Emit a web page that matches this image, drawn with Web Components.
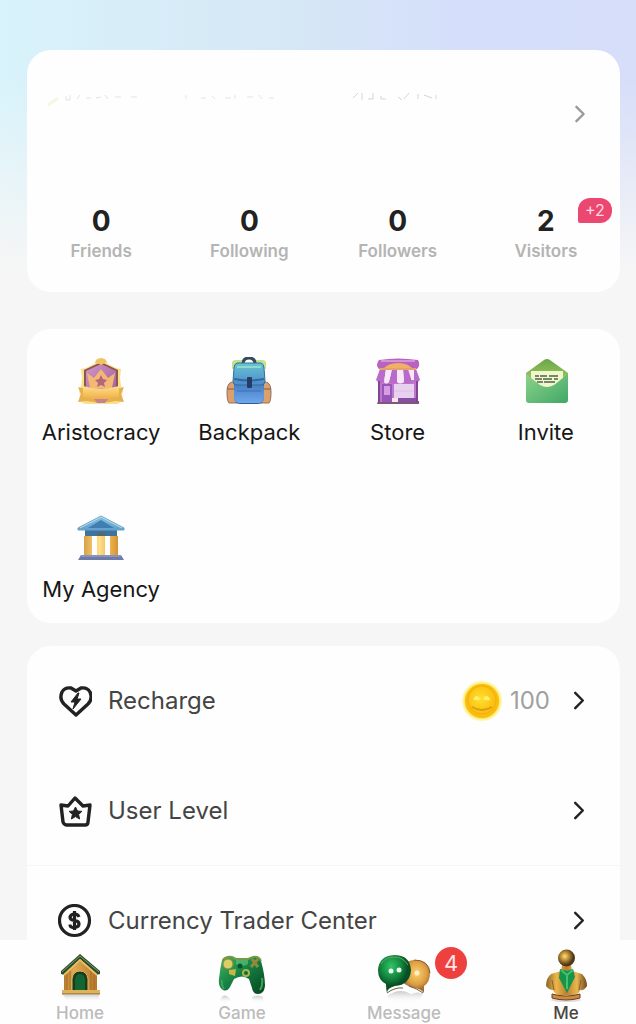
<!DOCTYPE html>
<html lang="en">
<head>
  <meta charset="UTF-8">
  <meta name="viewport" content="width=device-width, initial-scale=1">
  <title>Me</title>
  <style>
    body {
      margin: 0;
      font-family: Inter, "Liberation Sans", sans-serif;
      color: #222;
    }
  </style>
</head>
<body>
  <profile-page>
    <profile-card>
      <stat-item count="0" label="Friends"></stat-item>
      <stat-item count="0" label="Following"></stat-item>
      <stat-item count="0" label="Followers"></stat-item>
      <stat-item count="2" label="Visitors" badge="+2"></stat-item>
    </profile-card>

    <shortcut-grid>
      <shortcut-item icon="aristocracy">Aristocracy</shortcut-item>
      <shortcut-item icon="backpack">Backpack</shortcut-item>
      <shortcut-item icon="store">Store</shortcut-item>
      <shortcut-item icon="invite">Invite</shortcut-item>
      <shortcut-item icon="agency">My Agency</shortcut-item>
    </shortcut-grid>

    <menu-list>
      <menu-row icon="recharge" label="Recharge"><coin-amount>100</coin-amount></menu-row>
      <menu-row icon="level" label="User Level" divider></menu-row>
      <menu-row icon="dollar" label="Currency Trader Center"></menu-row>
    </menu-list>

    <tab-bar slot="tabs">
      <tab-item icon="home" label="Home"></tab-item>
      <tab-item icon="game" label="Game"></tab-item>
      <tab-item icon="message" label="Message" badge="4"></tab-item>
      <tab-item icon="me" label="Me" active></tab-item>
    </tab-bar>
  </profile-page>

  <script>
    const ICONS = {
      chevron: `<svg viewBox="0 0 12 20"><path d="M2 2l8 8-8 8" fill="none" stroke="currentColor" stroke-width="2.6" stroke-linecap="round" stroke-linejoin="round"/></svg>`,

      aristocracy: `<svg viewBox="0 0 48 48">
        <defs>
          <linearGradient id="gold" x2="0" y2="1"><stop offset="0" stop-color="#ffe08a"/><stop offset="1" stop-color="#f0ae48"/></linearGradient>
          <linearGradient id="plum" x2="1" y2="1"><stop offset="0" stop-color="#d096c4"/><stop offset="1" stop-color="#9f5a9c"/></linearGradient>
        </defs>
        <path d="M4 12l5-1 8-4 3-4 4-2 4 2 3 4 8 4 5 1-1 9 1 8 2 4-1 5 1 6-6 3H8l-6-3 1-6-1-5 2-4 1-8z" fill="#f9e08a"/>
        <path d="M7 13l17-8 17 8v20l-8 10-9 3-9-3-8-10z" fill="#8f5350"/>
        <path d="M9 14l15-7 15 7v18l-7 9-8 3-8-3-7-9z" fill="url(#plum)"/>
        <path d="M18 5l2-3 4-1 4 1 2 3-6 3z" fill="#eec562"/>
        <path d="M10 16l7 5 7-9 7 9 7-5-3 15H13z" fill="#f3b873"/>
        <path d="M24 18l2 4 4 1-3 3 1 4-4-2-4 2 1-4-3-3 4-1z" fill="#b4677c"/>
        <path d="M1 30l7 2q16 4 32 0l7-2-3 7 3 8-8-1q-15 3-30 0l-8 1 3-8z" fill="#e6b04e"/>
        <path d="M6 29q18 5 36 0v11q-18 4-36 0z" fill="url(#gold)"/>
        <path d="M17 42h14l-3 4h-8z" fill="#c58290"/>
      </svg>`,

      backpack: `<svg viewBox="0 0 48 48">
        <defs>
          <linearGradient id="flap" x2="0" y2="1"><stop offset="0" stop-color="#6ac5cd"/><stop offset="1" stop-color="#4b8bd0"/></linearGradient>
          <linearGradient id="bag" x2="0" y2="1"><stop offset="0" stop-color="#4379bd"/><stop offset="1" stop-color="#6ea7ed"/></linearGradient>
        </defs>
        <path d="M7 12V6q0-3 4-3h6v6zM41 12V6q0-3-4-3h-6v6z" fill="#bfe28f"/>
        <path d="M18 7q0-6 6-6t6 6" fill="none" stroke="#34495a" stroke-width="3"/>
        <path d="M7 25q-5 1-5 10 0 9 2 11h9V25zM41 25q5 1 5 10 0 9-2 11h-9V25z" fill="#dda06d" stroke="#93705b"/>
        <path d="M2 32h8M38 32h8" stroke="#76604f"/>
        <rect x="9" y="7" width="30" height="40" rx="6" fill="#315c8d"/>
        <rect x="9" y="25" width="30" height="21" rx="5" fill="url(#bag)"/>
        <path d="M12 6h24q3 1 3 5l1 13q0 4-4 4H12q-4 0-4-4l1-13q0-4 3-5z" fill="url(#flap)" stroke="#31709a"/>
        <path d="M12 10h24" stroke="#90d9d1" stroke-width="2"/>
        <path d="M9 22q15 3 30 0" fill="none" stroke="#34689b" stroke-width="2"/>
        <rect x="22" y="20" width="5" height="11" rx="1" fill="#253c65"/>
        <path d="M12 34h24" stroke="#3b70b5"/>
      </svg>`,

      store: `<svg viewBox="0 0 48 48">
        <path d="M4 44h41v3H3z" fill="#805875"/>
        <path d="M5 16h38v29H5z" fill="#bf77ce"/>
        <path d="M5 3q19-3 39 0 3 5-1 9H5Q1 8 5 3z" fill="#b864bf"/>
        <path d="M7 4h34" stroke="#d492d7" stroke-width="2"/>
        <path d="M9 12q5-6 15-6t15 6z" fill="#f1b063"/>
        <path d="M6 12h36l4 11H2z" fill="#f8e8f8"/>
        <path d="M6 12h6l-2 13q-4 3-8-2zM18 12h5v13q-4 3-8 0zM29 12h5l4 13q-4 3-8 0zM40 12h2l4 11q-3 4-6 2z" fill="#b86bc8"/>
        <path d="M12 12h6l-3 13q-3 3-5 0zM23 12h6l1 13q-4 3-7 0z" fill="#f8e8f8"/>
        <path d="M6 12h36" stroke="#e4a26d" stroke-width="2"/>
        <rect x="8" y="27" width="10" height="18" fill="#9657b8"/>
        <rect x="10" y="29" width="6" height="9" fill="#d99be1"/>
        <rect x="20" y="27" width="20" height="14" fill="#e7d1ef"/>
        <path d="M20 34h20" stroke="#dcbfe8"/>
        <path d="M19 41h23v4H19z" fill="#8750a4"/>
        <path d="M18 41h6v4h-6z" fill="#f5e7ea"/>
        <path d="M5 24v21M43 24v21" stroke="#804590" stroke-width="2"/>
      </svg>`,

      invite: `<svg viewBox="0 0 48 48">
        <defs>
          <linearGradient id="lid" x2="0" y2="1"><stop offset="0" stop-color="#6aa548"/><stop offset="1" stop-color="#c9e579"/></linearGradient>
          <linearGradient id="front" x2="1" y2="1"><stop offset="0" stop-color="#8ed38a"/><stop offset="1" stop-color="#3fa867"/></linearGradient>
        </defs>
        <path d="M4 16L22 3q3-2 6 0l18 13v25H4z" fill="url(#lid)"/>
        <path d="M9 14h32v22H9z" fill="#f1f7c8"/>
        <path d="M13 19h4m1 0h7m2 0h9M13 22h7m1 0h9m2 0h4M15 25h6m1 0h11" stroke="#4e6350" stroke-width="1.6"/>
        <path d="M4 17l14 11q7 4 14 0l14-11v26q0 3-3 3H7q-3 0-3-3z" fill="url(#front)"/>
      </svg>`,

      agency: `<svg viewBox="0 0 48 48">
        <defs>
          <linearGradient id="column"><stop offset="0" stop-color="#d9a044"/><stop offset=".45" stop-color="#ffdf87"/><stop offset="1" stop-color="#d9932c"/></linearGradient>
          <linearGradient id="roof" x2="0" y2="1"><stop offset="0" stop-color="#8bc2e2"/><stop offset="1" stop-color="#5f9fcc"/></linearGradient>
        </defs>
        <path d="M8 16h32v6H8z" fill="#3d739e"/>
        <path d="M7 22h8v20H7zM20 21h8v21h-8zM33 22h8v20h-8z" fill="url(#column)"/>
        <path d="M20 19h8v3h-8z" fill="#5e6468"/>
        <path d="M24 2l23 12v2H1v-2z" fill="url(#roof)" stroke="#6ba3c8"/>
        <path d="M24 6l13 8H11z" fill="#3f7eb1"/>
        <path d="M3 14L24 3l21 11" fill="none" stroke="#b7dced"/>
        <path d="M4 41h40l3 5H1z" fill="#6c7baa"/>
        <path d="M4 42h40" stroke="#a7acd0"/>
      </svg>`,

      recharge: `<svg viewBox="0 0 34 34">
        <path d="M18 31L6 20Q1 15 4 8 7 3 13 4l5 3 5-3Q29 3 32 8 35 15 30 20z" fill="none" stroke="currentColor" stroke-width="3.400" stroke-linejoin="round"/>
        <path d="M20 9l-7 9h4l-2 7 8-10h-4l2-6z" fill="currentColor" stroke="currentColor" stroke-linejoin="round"/>
      </svg>`,

      level: `<svg viewBox="0 0 34 34">
        <path d="M3 11l7 1 7-8 8 8 7-1-2 17q0 3-3 3H9q-3 0-4-3z" fill="none" stroke="currentColor" stroke-width="3.400" stroke-linejoin="round"/>
        <path d="M17.500 13l2 4 4.400.4-3.300 3 1 4.600-4.100-2.400-4.100 2.400 1-4.600-3.300-3 4.400-.4z" fill="currentColor" stroke="currentColor" stroke-linejoin="round"/>
      </svg>`,

      dollar: `<svg viewBox="0 0 34 34" fill="none" stroke="currentColor">
        <circle cx="16.500" cy="16.500" r="15" stroke-width="3.200"/>
        <path d="M21 13q-1-3-4.500-3T12 13q0 3 4.500 3.500t4.500 3.500-4.500 3.500-4.500-3M16.500 7v19" stroke-width="3.200"/>
      </svg>`,

      coin: `<svg viewBox="0 0 42 42">
        <defs>
          <radialGradient id="glow"><stop offset=".78" stop-color="#ffe126"/><stop offset="1" stop-color="#ffec5b" stop-opacity="0"/></radialGradient>
          <radialGradient id="face" cx=".45" cy=".45"><stop offset="0" stop-color="#ffe12d"/><stop offset="1" stop-color="#fbc012"/></radialGradient>
        </defs>
        <circle cx="21" cy="21" r="21" fill="url(#glow)"/>
        <circle cx="21" cy="21" r="17" fill="#f9bd10"/>
        <circle cx="21" cy="20" r="14" fill="url(#face)" stroke="#f1ad13"/>
        <path d="M14 20q1-5 4 0M24 20q1-5 4 0" fill="none" stroke="#ffef72" stroke-width="3"/>
        <path d="M11 27q10 6 20 0" fill="none" stroke="#dba00c" stroke-width="2"/>
      </svg>`,

      home: `<svg viewBox="0 0 56 56">
        <defs>
          <linearGradient id="wall" x2="1"><stop offset="0" stop-color="#b57b2d"/><stop offset=".3" stop-color="#e0aa55"/><stop offset="1" stop-color="#b8782c"/></linearGradient>
          <linearGradient id="shade" x2="0" y2="1"><stop offset="0" stop-color="#888" stop-opacity=".35"/><stop offset="1" stop-color="#fff" stop-opacity="0"/></linearGradient>
        </defs>
        <path d="M11 48h36v7H16z" fill="url(#shade)"/>
        <path d="M28 11l17 14v20H12V25z" fill="url(#wall)"/>
        <path d="M15 27v16M42 27v16M18 24v19M39 24v19" stroke="#a66b29"/>
        <path d="M28 7L9 24v3l4 1 15-14 16 14 4-1v-3z" fill="#254d2d"/>
        <path d="M10 25L28 9l19 16" fill="none" stroke="#8f9967"/>
        <path d="M12 28l16-15 17 15" fill="none" stroke="#efc061" stroke-width="2"/>
        <path d="M20 44V32q1-8 8-8t8 8v12z" fill="#173d1e" stroke="#e2b651"/>
        <path d="M23 43V32q1-5 5-5t5 5v11z" fill="#146534"/>
        <path d="M10 43h38v4H10z" fill="#deb15b"/><path d="M10 47h38" stroke="#87602d"/>
      </svg>`,

      game: `<svg viewBox="0 0 56 56">
        <defs>
          <linearGradient id="pad" x2="1" y2="1"><stop offset="0" stop-color="#43b866"/><stop offset=".45" stop-color="#168144"/><stop offset="1" stop-color="#06441f"/></linearGradient>
          <linearGradient id="shade" x2="0" y2="1"><stop offset="0" stop-color="#777" stop-opacity=".4"/><stop offset="1" stop-color="#fff" stop-opacity="0"/></linearGradient>
        </defs>
        <path d="M6 54q3-9 9-3l3 5H8zM38 50q6-3 11 0v6H40z" fill="url(#shade)"/>
        <path d="M8 13q2-4 10-3l4 2h12l5-2q6-1 8 4 4 14 4 25-1 8-7 8-5 0-6-6l-3-9q-7-5-15 0l-4 8q-3 5-7 3-5-3-4-11 1-10 3-19z" fill="url(#pad)"/>
        <path d="M9 13q3-4 9-3l4 2h12l5-2q6-1 8 4" fill="none" stroke="#719d46" stroke-width="2"/>
        <circle cx="14" cy="17" r="5" fill="#d9cf68" stroke="#9d8532"/>
        <path d="M15 23l7-1-1 7-6-2z" fill="#c4b746"/>
        <path d="M22 13h12v4q-6 4-12 0z" fill="#67c477" opacity=".6"/>
        <circle cx="26" cy="19" r="2.500" fill="#08562d"/>
        <circle cx="32" cy="26" r="3" fill="#136a36" stroke="#a9b74c" stroke-width="2"/>
        <path d="M38 12l6 8M44 12l-7 8" stroke="#8f8a3c" stroke-width="3"/>
        <path d="M8 33q-1 5 2 9M48 31q1 8-2 12" fill="none" stroke="#3fa35a" stroke-width="2"/>
      </svg>`,

      message: `<svg viewBox="0 0 56 56">
        <defs>
          <radialGradient id="green" cx=".4" cy=".3"><stop offset="0" stop-color="#32c568"/><stop offset=".65" stop-color="#12853d"/><stop offset="1" stop-color="#075025"/></radialGradient>
          <radialGradient id="amber" cx=".55" cy=".4"><stop offset="0" stop-color="#ffd16a"/><stop offset=".7" stop-color="#dc9e43"/><stop offset="1" stop-color="#a36c31"/></radialGradient>
          <linearGradient id="shade" x2="0" y2="1"><stop offset="0" stop-color="#777" stop-opacity=".4"/><stop offset="1" stop-color="#fff" stop-opacity="0"/></linearGradient>
        </defs>
        <path d="M11 49q13-9 24-2 7-3 12 0l-5 9H16z" fill="url(#shade)"/>
        <path d="M38 13q15 0 16 13 0 9-6 13v7q-3-4-9-5-13-2-15-12 1-15 14-16z" fill="url(#amber)"/>
        <path d="M38 13q15 0 16 13" fill="none" stroke="#88582d"/>
        <path d="M18 8q16 0 17 15-1 15-16 16-8 2-8 7-1-3-1-9-8-4-8-14Q3 9 18 8z" fill="url(#green)"/>
        <path d="M5 17q4-7 13-7t14 8" fill="none" stroke="#60a767"/>
        <circle cx="15" cy="24" r="2.500" fill="#e9ffed"/><circle cx="23" cy="23" r="2.500" fill="#e9ffed"/><circle cx="41" cy="26" r="2.500" fill="#fff1ce"/>
        <path d="M11 46q8-6 16-5M33 39q9 3 14 7" fill="none" stroke="#6e623d"/>
      </svg>`,

      me: `<svg viewBox="0 0 56 56">
        <defs>
          <radialGradient id="head" cx=".4" cy=".4"><stop offset="0" stop-color="#ffe17b"/><stop offset=".5" stop-color="#b98a35"/><stop offset="1" stop-color="#4e3718"/></radialGradient>
          <linearGradient id="body"><stop offset="0" stop-color="#87652a"/><stop offset=".25" stop-color="#edb64b"/><stop offset=".5" stop-color="#b9822d"/><stop offset=".75" stop-color="#e9b651"/><stop offset="1" stop-color="#6e471d"/></linearGradient>
        </defs>
        <ellipse cx="28" cy="53" rx="15" ry="2" fill="#ddd"/>
        <path d="M24 18h9l1 6 10 3q5 5 5 12-3 5-7 4-1 4-6 5H20q-4-2-5-5-4 0-7-4 0-8 5-12l10-3z" fill="url(#body)"/>
        <circle cx="28.500" cy="11" r="8.500" fill="url(#head)"/>
        <path d="M22 22l7 2 6-2 2 8-8 16-8-15z" fill="#17934a"/>
        <path d="M23 23l6 5 6-5M29 28v14" fill="none" stroke="#3ec375" stroke-width="2"/>
        <path d="M14 33l2 10M43 33l-2 10" stroke="#8f6022"/>
        <path d="M14 47q14 4 28 0v4q-14 4-28 0z" fill="#c98d40" stroke="#743b1e"/>
      </svg>`
    };

    class AppIcon extends HTMLElement {
      connectedCallback() {
        const shadowDOM = this.attachShadow({ mode: "open" });
        shadowDOM.innerHTML = `
        <style>
          :host {
            display: block;
            flex: none;
          }

          svg {
            display: block;
            width: 100%;
            height: 100%;
          }
        </style>
        ${ICONS[this.getAttribute("name")]}
        `;
        shadowDOM.querySelector("svg").setAttribute("aria-hidden", "true");
      }
    }

    class ProfilePage extends HTMLElement {
      connectedCallback() {
        this.attachShadow({ mode: "open" }).innerHTML = `
        <style>
          :host {
            display: flex;
            flex-direction: column;
            height: 100vh;
            background:
              linear-gradient(to bottom, transparent 0, transparent 80px, #f6f6f6 270px),
              linear-gradient(to right, #d8f3fb, #d6e7f5 45%, #d5defb 75%, #d6def9);
          }

          main {
            box-sizing: border-box;
            flex: 1;
            min-height: 0;
            overflow: hidden auto;
            scrollbar-width: none;
            padding: 50px 16px 0 27px;
          }
        </style>
        <main><slot></slot></main>
        <slot name="tabs"></slot>
        `;
      }
    }

    class ProfileCard extends HTMLElement {
      connectedCallback() {
        this.attachShadow({ mode: "open" }).innerHTML = `
        <style>
          :host {
            display: block;
            background: #fefefe;
            border-radius: 24px;
            margin-bottom: 37px;
            padding-bottom: 29px;
          }

          .profile {
            display: flex;
            align-items: center;
            justify-content: space-between;
            height: 128px;
            padding: 0 34px 0 20px;
            color: #999;
          }

          .name {
            width: 400px;
            height: 48px;
          }

          app-icon {
            width: 12px;
            height: 18px;
          }

          .stats {
            display: grid;
            grid-template-columns: repeat(4, 1fr);
            padding-top: 27px;
          }
        </style>
        <a class="profile" href="#profile" aria-label="Profile">
          <svg class="name" viewBox="0 0 400 48" aria-hidden="true" fill="none" stroke="#e3e3e3">
            <path d="M1 15l10-7" stroke="#f2f9df" stroke-width="3"/>
            <path d="M19 6v4h4V5M30 9l3-4M39 8h5M49 8l5-1M58 5l3 4M68 7h6M84 7h6M139 5v4M154 8h5M165 6l3 3M178 8h6M188 5v4M200 7h6M212 5l3 4M222 8h5" stroke-width="1"/>
            <path d="M306 8l5-5M315 3v7M321 9h5V3M334 6v3h5M351 7l4 3M357 9l5-6M371 4v5M377 5l8 3M389 5v4" stroke="#d5d5d5" stroke-width="1"/>
          </svg>
          <app-icon name="chevron"></app-icon>
        </a>
        <div class="stats"><slot></slot></div>
        `;
      }
    }

    class StatItem extends HTMLElement {
      connectedCallback() {
        const badge = this.getAttribute("badge");

        this.attachShadow({ mode: "open" }).innerHTML = `
        <style>
          :host {
            display: block;
          }

          a {
            position: relative;
            display: flex;
            flex-direction: column;
            align-items: center;
            gap: 2px;
            color: #222;
            text-decoration: none;
          }

          .count {
            font-size: 28px;
            font-weight: 700;
            line-height: 32px;
          }

          .label {
            font-size: 17px;
            font-weight: 600;
            line-height: 24px;
            color: #b4b4b4;
          }

          .badge {
            position: absolute;
            top: -7px;
            left: calc(50% + 32px);
            padding: 0 7px;
            border-radius: 12px 12px 12px 2px;
            background: #eb4770;
            color: #ffdce5;
            font-size: 16px;
            line-height: 25px;
          }
        </style>
        <a href="#${this.getAttribute("label").toLowerCase()}">
          <span class="count">${this.getAttribute("count")}</span>
          <span class="label">${this.getAttribute("label")}</span>
          ${badge ? `<span class="badge">${badge}</span>` : ""}
        </a>
        `;
      }
    }

    class ShortcutGrid extends HTMLElement {
      connectedCallback() {
        this.attachShadow({ mode: "open" }).innerHTML = `
        <style>
          :host {
            display: grid;
            grid-template-columns: repeat(4, 1fr);
            row-gap: 68px;
            margin-bottom: 23px;
            padding: 28px 0 20px;
            border-radius: 24px;
            background: #fefefe;
          }
        </style>
        <slot></slot>
        `;
      }
    }

    class ShortcutItem extends HTMLElement {
      connectedCallback() {
        this.attachShadow({ mode: "open" }).innerHTML = `
        <style>
          :host {
            display: block;
          }

          a {
            display: flex;
            flex-direction: column;
            align-items: center;
            gap: 13px;
            color: #161616;
            font-size: 22px;
            line-height: 28px;
            text-decoration: none;
            white-space: nowrap;
          }

          app-icon {
            width: 48px;
            height: 48px;
          }
        </style>
        <a href="#${this.getAttribute("icon")}">
          <app-icon name="${this.getAttribute("icon")}"></app-icon>
          <span><slot></slot></span>
        </a>
        `;
      }
    }

    class MenuList extends HTMLElement {
      connectedCallback() {
        this.attachShadow({ mode: "open" }).innerHTML = `
        <style>
          :host {
            display: block;
            border-radius: 24px 24px 0 0;
            background: #fefefe;
          }
        </style>
        <slot></slot>
        `;
      }
    }

    class MenuRow extends HTMLElement {
      connectedCallback() {
        this.attachShadow({ mode: "open" }).innerHTML = `
        <style>
          :host {
            display: block;
          }

          a {
            box-sizing: border-box;
            display: flex;
            align-items: center;
            height: 110px;
            padding: 0 35px 0 31px;
            border-bottom: 1px solid transparent;
            color: #222;
            text-decoration: none;
          }

          :host([divider]) a {
            border-bottom-color: #f6f6f6;
          }

          .icon {
            width: 34px;
            height: 34px;
            margin-right: 16px;
          }

          .label {
            flex: 1;
            color: #444;
            font-size: 24px;
            line-height: 32px;
          }

          .chevron {
            width: 12px;
            height: 19px;
            margin-left: 23px;
          }
        </style>
        <a href="#${this.getAttribute("icon")}">
          <app-icon class="icon" name="${this.getAttribute("icon")}"></app-icon>
          <span class="label">${this.getAttribute("label")}</span>
          <slot></slot>
          <app-icon class="chevron" name="chevron"></app-icon>
        </a>
        `;
      }
    }

    class CoinAmount extends HTMLElement {
      connectedCallback() {
        this.attachShadow({ mode: "open" }).innerHTML = `
        <style>
          :host {
            display: flex;
            align-items: center;
            gap: 7px;
            color: #a0a0a0;
            font-size: 24px;
            line-height: 32px;
          }

          app-icon {
            width: 42px;
            height: 42px;
          }
        </style>
        <app-icon name="coin"></app-icon>
        <span><slot></slot></span>
        `;
      }
    }

    class TabBar extends HTMLElement {
      connectedCallback() {
        this.attachShadow({ mode: "open" }).innerHTML = `
        <style>
          :host {
            display: block;
            background: #fefefe;
          }

          nav {
            display: flex;
            justify-content: space-between;
            padding: 7px 14px 1px 24px;
          }
        </style>
        <nav aria-label="Main"><slot></slot></nav>
        `;
      }
    }

    class TabItem extends HTMLElement {
      connectedCallback() {
        const badge = this.getAttribute("badge");

        this.attachShadow({ mode: "open" }).innerHTML = `
        <style>
          :host {
            display: block;
            width: 112px;
          }

          a {
            position: relative;
            display: flex;
            flex-direction: column;
            align-items: center;
            color: #bbb;
            font-size: 17px;
            font-weight: 500;
            line-height: 20px;
            text-decoration: none;
          }

          :host([active]) a {
            color: #4b4542;
          }

          app-icon {
            width: 56px;
            height: 56px;
          }

          .badge {
            position: absolute;
            top: 0;
            left: calc(50% + 31px);
            width: 32px;
            border-radius: 50%;
            background: #ef4040;
            color: #ffe5e5;
            font-size: 22px;
            font-weight: 400;
            line-height: 32px;
            text-align: center;
          }
        </style>
        <a href="#${this.getAttribute("icon")}">
          <app-icon name="${this.getAttribute("icon")}"></app-icon>
          <span>${this.getAttribute("label")}</span>
          ${badge ? `<span class="badge">${badge}</span>` : ""}
        </a>
        `;
      }
    }

    customElements.define("app-icon", AppIcon);
    customElements.define("profile-page", ProfilePage);
    customElements.define("profile-card", ProfileCard);
    customElements.define("stat-item", StatItem);
    customElements.define("shortcut-grid", ShortcutGrid);
    customElements.define("shortcut-item", ShortcutItem);
    customElements.define("menu-list", MenuList);
    customElements.define("menu-row", MenuRow);
    customElements.define("coin-amount", CoinAmount);
    customElements.define("tab-bar", TabBar);
    customElements.define("tab-item", TabItem);
  </script>
</body>
</html>
